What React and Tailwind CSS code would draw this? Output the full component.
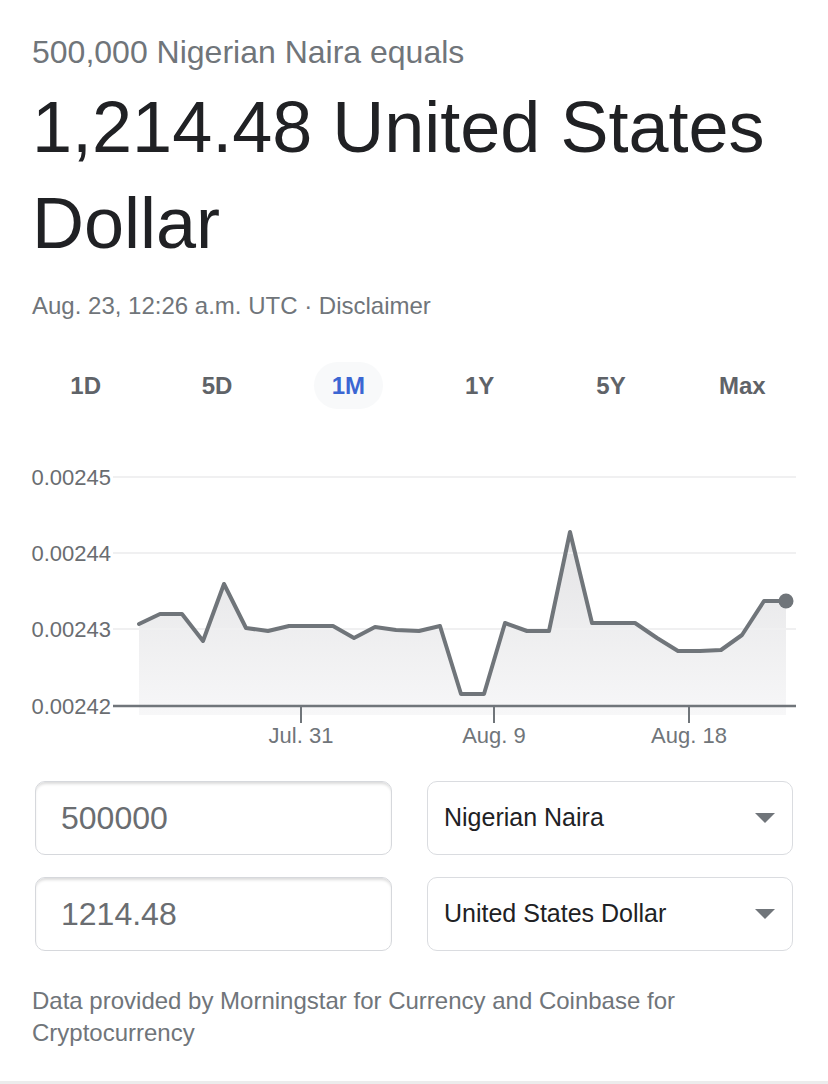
import React from "react";

const pts = [
  [139, 624], [160, 614], [182, 614], [203, 641], [224, 584], [246, 628], [268, 631],
  [289, 626], [311, 626], [333, 626], [354, 638], [375, 627], [396, 630], [419, 631],
  [440, 626], [461, 694], [484, 694], [505, 623], [527, 631], [549, 631], [570, 532],
  [592, 623], [613, 623], [635, 623], [657, 638], [678, 651], [700, 651], [721, 650],
  [742, 635], [764, 601], [786, 601],
];

function Chart() {
  const line = pts.map((p, i) => (i === 0 ? "M" : "L") + p[0] + " " + p[1]).join(" ");
  const area = line + " L786 715 L139 715 Z";
  const font = "'Liberation Sans', Arial, sans-serif";
  const yLabels = [
    ["0.00245", 477],
    ["0.00244", 553],
    ["0.00243", 629],
    ["0.00242", 706],
  ];
  const xLabels = [
    ["Jul. 31", 301],
    ["Aug. 9", 494],
    ["Aug. 18", 689],
  ];
  return (
    <svg width="828" height="305" viewBox="0 455 828 305" className="block">
      <defs>
        <linearGradient id="fillg" x1="0" y1="530" x2="0" y2="715" gradientUnits="userSpaceOnUse">
          <stop offset="0" stopColor="#e3e3e5" />
          <stop offset="1" stopColor="#f7f7f8" />
        </linearGradient>
      </defs>
      <path d={area} fill="url(#fillg)" />
      {[477, 553, 629].map((y) => (
        <line key={y} x1="113" x2="796" y1={y} y2={y} stroke="#f0f0f1" strokeWidth="2" />
      ))}
      <line x1="113" x2="796" y1="706" y2="706" stroke="#70757a" strokeWidth="2.5" />
      {xLabels.map(([t, x]) => (
        <line key={t} x1={x} x2={x} y1="706" y2="723" stroke="#70757a" strokeWidth="2" />
      ))}
      <path d={line} fill="none" stroke="#70757a" strokeWidth="4" strokeLinejoin="round" strokeLinecap="round" />
      <circle cx="786" cy="601" r="7.5" fill="#70757a" />
      {yLabels.map(([t, y]) => (
        <text key={t} x="111" y={y} textAnchor="end" dominantBaseline="central" fontSize="22" fill="#6a6d71" fontFamily={font}>
          {t}
        </text>
      ))}
      {xLabels.map(([t, x]) => (
        <text key={t} x={x} y="735" textAnchor="middle" dominantBaseline="central" fontSize="22" fill="#70757a" fontFamily={font}>
          {t}
        </text>
      ))}
    </svg>
  );
}

function Caret() {
  return (
    <svg width="20" height="10" viewBox="0 0 20 10" className="block">
      <path d="M0 0 L20 0 L10 10 Z" fill="#70757a" />
    </svg>
  );
}

export default function App() {
  const tabs = ["1D", "5D", "1M", "1Y", "5Y", "Max"];
  return (
    <div className="w-[828px] min-h-[1084px] bg-white font-['Liberation_Sans',Arial,sans-serif]">
      <div className="pt-[32px] pl-[32px] pr-[20px]">
        <div className="text-[32px] leading-[40px] text-[#70757a]">500,000 Nigerian Naira equals</div>
        <div className="mt-[7px] text-[72px] leading-[96px] text-[#202124]">1,214.48 United States Dollar</div>
        <div className="mt-[19px] text-[24px] leading-[32px] text-[#70757a]">Aug. 23, 12:26 a.m. UTC · Disclaimer</div>
      </div>

      <div className="mt-[40px] px-[20px] grid grid-cols-6">
        {tabs.map((t) => (
          <div key={t} className="flex justify-center">
            <div
              className={
                t === "1M"
                  ? "h-[47px] px-[18px] rounded-full bg-[#f8f9fa] flex items-center text-[24px] font-bold text-[#3b66d3]"
                  : "h-[47px] px-[18px] rounded-full flex items-center text-[24px] font-bold text-[#5f6368]"
              }
            >
              {t}
            </div>
          </div>
        ))}
      </div>

      <div className="mt-[46px]">
        <Chart />
      </div>

      <div className="mt-[21px] pl-[35px] pr-[35px] flex flex-col gap-[22px]">
        {[
          ["500000", "Nigerian Naira"],
          ["1214.48", "United States Dollar"],
        ].map(([v, c]) => (
          <div key={v} className="flex gap-[35px]">
            <div className="w-[357px] h-[74px] rounded-[10px] border border-[#d6d8dc] shadow-[inset_0_3px_3px_-1px_rgba(0,0,0,0.14)] flex items-center pl-[25px] text-[32px] text-[#6a6d71]">
              {v}
            </div>
            <div className="flex-1 h-[74px] rounded-[10px] border border-[#dadce0] flex items-center justify-between pl-[16px] pr-[17px] text-[25px] text-[#202124]">
              <span>{c}</span>
              <Caret />
            </div>
          </div>
        ))}
      </div>

      <div className="mt-[34px] pl-[32px] pr-[40px] text-[24px] leading-[32px] text-[#70757a]">
        Data provided by Morningstar for Currency and Coinbase for Cryptocurrency
      </div>
      <div className="mt-[32px] h-[10px] bg-[#ececec]" />
    </div>
  );
}
